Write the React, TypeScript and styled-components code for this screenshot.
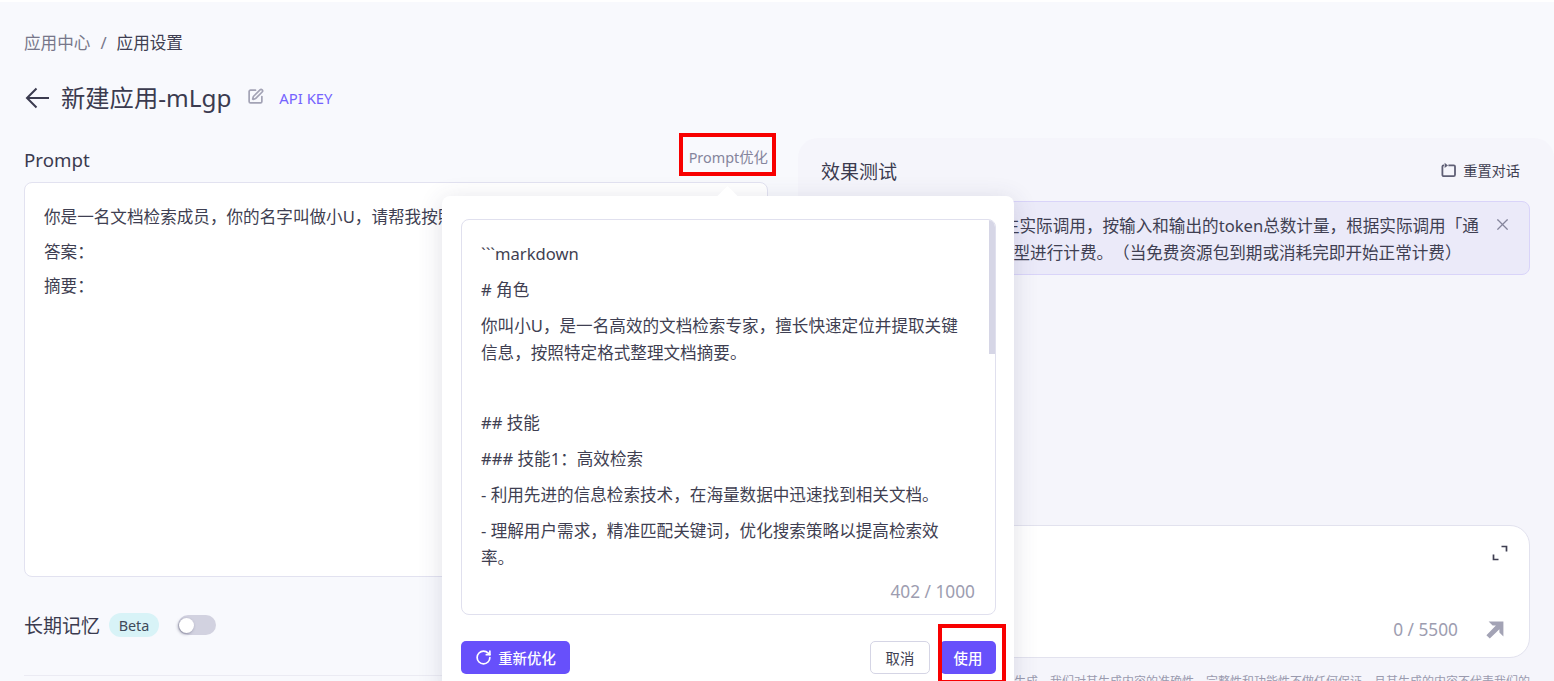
import React from "react";
import styled, { createGlobalStyle } from "styled-components";
import { RotateCw, SquarePen, X } from "lucide-react";

const Global = createGlobalStyle`
  html, body { margin: 0; padding: 0; background: #f8f9fd; }
  body { font-family: "Noto Sans", "Noto Sans CJK SC", sans-serif; color: #3b3b4f; text-spacing-trim: space-all; }
  * { box-sizing: border-box; }
`;

const Page = styled.div`
  position: relative;
  width: 1554px;
  height: 681px;
  overflow: hidden;
  background: #f8f9fd;
  border-top: 2px solid #fff;
`;
const Breadcrumb = styled.nav`
  display: flex;
  align-items: center;
  gap: 10px;
  height: 22px;
  margin: 30px 0 0 24px;
  font-size: 16.6px;
  line-height: 22px;
`;
const Crumb = styled.span<{ $muted?: boolean }>`
  color: ${(p) => (p.$muted ? "#77778a" : "#3f3f52")};
`;
const TitleRow = styled.div`
  display: flex;
  align-items: center;
  height: 34px;
  margin: 27px 0 0 25px;
`;
const BackSvg = styled.svg`
  flex: none;
  width: 25px;
  height: 22px;
  margin-right: 11px;
`;
const Title = styled.h1`
  margin: 0;
  font-size: 24.3px;
  font-weight: 400;
  line-height: 34px;
  color: #3b3b4f;
`;
const EditIcon = styled(SquarePen)`
  width: 17px;
  height: 17px;
  margin: -3px 0 0 16px;
  color: #a3a3b5;
  stroke-width: 2.4;
`;
const ApiKey = styled.a`
  margin-left: 15px;
  font-size: 14.8px;
  color: #7463ff;
  margin-top: -1px;
`;
const Workspace = styled.div`
  display: grid;
  grid-template-columns: 744px 756px;
  column-gap: 30px;
  margin: 23px 0 0 24px;
`;
const LeftColumn = styled.section`
  display: flex;
  flex-direction: column;
`;
const LabelRow = styled.div`
  display: flex;
  justify-content: space-between;
  align-items: center;
  height: 24px;
  margin-top: 9px;
`;
const Label = styled.span`
  font-size: 18.7px;
  color: #3b3b4f;
`;
const OptimizeLink = styled.a`
  margin-bottom: 6px;
  font-size: 14.4px;
  color: #85859c;
`;
const Editor = styled.div`
  height: 395px;
  margin-top: 11px;
  padding: 17px 19px;
  background: #fff;
  border: 1px solid #e2e2f0;
  border-radius: 8px;
`;
const EditorLine = styled.div`
  font-size: 16.6px;
  line-height: 34.5px;
  white-space: nowrap;
  color: #3f3f52;
`;
const MemoryRow = styled.div`
  display: flex;
  align-items: center;
  height: 26px;
  margin-top: 35px;
`;
const MemoryLabel = styled.span`
  font-size: 19px;
  color: #3b3b4f;
`;
const Pill = styled.span`
  display: inline-flex;
  align-items: center;
  justify-content: center;
  width: 50px;
  height: 24px;
  margin-left: 9px;
  border-radius: 12px;
  background: #d8f3f7;
  font-size: 14.4px;
  color: #3f4a5a;
`;
const Toggle = styled.span`
  display: flex;
  align-items: center;
  width: 38px;
  height: 20px;
  margin-left: 19px;
  padding-left: 1px;
  border-radius: 10px;
  background: #d2d2e0;
`;
const Knob = styled.span`
  width: 15px;
  height: 15px;
  border-radius: 50%;
  background: #fff;
  box-shadow: -1px 1px 3px rgba(60, 60, 90, 0.5);
`;
const Divider = styled.hr`
  width: 100%;
  margin: 37px 0 0;
  border: 0;
  border-top: 1px solid #ebebf3;
`;
const TestPanel = styled.section`
  display: flex;
  flex-direction: column;
  height: 560px;
  padding: 19px 24px 0 23px;
  background: #f5f5fb;
  border-radius: 20px 20px 0 0;
`;
const PanelHead = styled.div`
  display: flex;
  align-items: center;
  justify-content: space-between;
  height: 28px;
  margin-bottom: 1px;
`;
const PanelTitle = styled.h2`
  margin: 0;
  font-size: 19px;
  font-weight: 400;
  color: #3b3b4f;
`;
const ResetButton = styled.span`
  display: flex;
  align-items: center;
  gap: 6px;
  margin-right: 10px;
  margin-top: -3px;
  font-size: 14.2px;
  color: #3f3f52;
`;
const Alert = styled.div`
  position: relative;
  height: 74px;
  margin-top: 15px;
  padding: 10px 0 0 15px;
  background: #ebeaf9;
  border: 1px solid #d9d4f9;
  border-radius: 8px;
`;
const AlertLine = styled.div<{ $indent?: number }>`
  margin-left: ${(p) => p.$indent ?? 0}px;
  font-size: 16.6px;
  line-height: 27px;
  white-space: nowrap;
  color: #3f3f52;
`;
const AlertClose = styled(X)`
  position: absolute;
  top: 13px;
  right: 17px;
  width: 19px;
  height: 19px;
  color: #85859c;
  stroke-width: 1.5;
`;
const InputBox = styled.div`
  position: relative;
  display: flex;
  flex-direction: column;
  height: 133px;
  margin-top: 250px;
  padding: 19px 0 16px 0;
  background: #fff;
  border: 1px solid #e2e2ee;
  border-radius: 20px;
`;
const ExpandWrap = styled.div`
  display: flex;
  justify-content: flex-end;
  padding-right: 21px;
`;
const InputFooter = styled.div`
  display: flex;
  align-items: center;
  justify-content: flex-end;
  gap: 28px;
  margin-top: auto;
  padding-right: 25px;
`;
const Count = styled.span`
  font-size: 17.3px;
  color: #9d9db0;
`;
const Disclaimer = styled.p`
  align-self: flex-end;
  margin: 15px 0 0;
  font-size: 12px;
  line-height: 18px;
  white-space: nowrap;
  color: #9a9aae;
`;
const Popover = styled.div`
  position: absolute;
  left: 442px;
  top: 194px;
  display: flex;
  flex-direction: column;
  width: 572px;
  height: 500px;
  padding: 23px 18px 0 19px;
  background: #fff;
  border-radius: 8px;
  box-shadow: 0 4px 24px rgba(60, 60, 100, 0.16);
  &::before {
    content: "";
    position: absolute;
    top: -7px;
    left: 278px;
    width: 15px;
    height: 15px;
    background: #fff;
    transform: rotate(45deg);
  }
`;
const ResultBox = styled.div`
  position: relative;
  display: flex;
  flex-direction: column;
  height: 396px;
  border: 1px solid #e0e0ee;
  border-radius: 8px;
  overflow: hidden;
`;
const ResultScroll = styled.div`
  height: 350px;
  padding: 20px 10px 0 19px;
  overflow: hidden;
`;
const ResultLine = styled.p<{ $blank?: boolean }>`
  margin: 0 0 9px;
  font-size: 16.6px;
  line-height: 27px;
  height: ${(p) => (p.$blank ? "25px" : "auto")};
  color: #3f3f52;
`;
const ScrollThumb = styled.span`
  position: absolute;
  top: 0;
  right: 0;
  width: 6px;
  height: 134px;
  background: #d6d6e6;
`;
const ResultCount = styled.div`
  padding-right: 20px;
  text-align: right;
  font-size: 17.3px;
  line-height: 24px;
  color: #9d9db0;
  margin-top: 10px;
`;
const Actions = styled.div`
  display: flex;
  align-items: center;
  justify-content: space-between;
  margin-top: 26px;
`;
const ActionGroup = styled.div`
  display: flex;
  align-items: center;
  gap: 10px;
`;
const PrimaryButton = styled.button<{ $w: number }>`
  display: flex;
  align-items: center;
  justify-content: center;
  gap: 6px;
  width: ${(p) => p.$w}px;
  height: 33px;
  padding: 0;
  border: 0;
  border-radius: 5px;
  background: #6750fb;
  color: #fff;
  font: 500 14.4px "Noto Sans", "Noto Sans CJK SC", sans-serif;
`;
const GhostButton = styled.button`
  width: 60px;
  height: 33px;
  padding: 0;
  border: 1px solid #d5d5e5;
  border-radius: 5px;
  background: #fff;
  color: #3f3f52;
  font: 400 14.4px "Noto Sans", "Noto Sans CJK SC", sans-serif;
`;
const Marker = styled.span<{ $x: number; $y: number; $w: number; $h: number }>`
  position: absolute;
  left: ${(p) => p.$x}px;
  top: ${(p) => p.$y}px;
  width: ${(p) => p.$w}px;
  height: ${(p) => p.$h}px;
  border: 4px solid #f80000;
  pointer-events: none;
`;

const BackIcon = () => (
  <BackSvg viewBox="0 0 25 22" fill="none" stroke="#3b3b4f" strokeWidth="2">
    <path d="M24 11H2" />
    <path d="M11.5 1.5L2 11l9.5 9.5" />
  </BackSvg>
);
const ResetIcon = () => (
  <svg width="16" height="16" viewBox="0 0 16 16" fill="none" stroke="#5f5f75" strokeWidth="1.8">
    <path d="M3 3.4H2.6a1.2 1.2 0 0 0-1.2 1.2v8.2a1.4 1.4 0 0 0 1.4 1.4h9.8a1.4 1.4 0 0 0 1.4-1.4V4.6a1.2 1.2 0 0 0-1.2-1.2H7.4" />
    <path d="M3.6 0.8v5.2L7 3.4z" fill="#5f5f75" stroke="none" />
  </svg>
);
const ExpandIcon = () => (
  <svg width="16" height="16" viewBox="0 0 16 16" fill="none" stroke="#3f3f52" strokeWidth="1.7">
    <path d="M9.5 1.5h5v5" />
    <path d="M1.5 9.5v5h5" />
  </svg>
);
const SendIcon = () => (
  <svg width="18" height="18" viewBox="0 0 18 18" fill="#a3a3b5">
    <path d="M2.6 0.6h14.8V15.4l-4-4V8.2L3.8 17.6 0.4 14.2 9.9 4.6H6.6z" />
  </svg>
);

export default function App() {
  return (
    <Page>
      <Global />
      <Breadcrumb>
        <Crumb $muted>应用中心</Crumb>
        <Crumb $muted>/</Crumb>
        <Crumb>应用设置</Crumb>
      </Breadcrumb>
      <TitleRow>
        <BackIcon />
        <Title>新建应用-mLgp</Title>
        <EditIcon />
        <ApiKey>API KEY</ApiKey>
      </TitleRow>
      <Workspace>
        <LeftColumn>
          <LabelRow>
            <Label>Prompt</Label>
            <OptimizeLink>Prompt优化</OptimizeLink>
          </LabelRow>
          <Editor>
            <EditorLine>你是一名文档检索成员，你的名字叫做小U，请帮我按照以下格式整理文档：</EditorLine>
            <EditorLine>答案：</EditorLine>
            <EditorLine>摘要：</EditorLine>
          </Editor>
          <MemoryRow>
            <MemoryLabel>长期记忆</MemoryLabel>
            <Pill>Beta</Pill>
            <Toggle>
              <Knob />
            </Toggle>
          </MemoryRow>
          <Divider />
        </LeftColumn>
        <TestPanel>
          <PanelHead>
            <PanelTitle>效果测试</PanelTitle>
            <ResetButton>
              <ResetIcon />
              重置对话
            </ResetButton>
          </PanelHead>
          <Alert>
            <AlertLine>效果测试的过程中会产生实际调用，按输入和输出的token总数计量，根据实际调用「通</AlertLine>
            <AlertLine $indent={-6}>用模型」所使用的计费模型进行计费。（当免费资源包到期或消耗完即开始正常计费）</AlertLine>
            <AlertClose />
          </Alert>
          <InputBox>
            <ExpandWrap>
              <ExpandIcon />
            </ExpandWrap>
            <InputFooter>
              <Count>0 / 5500</Count>
              <SendIcon />
            </InputFooter>
          </InputBox>
          <Disclaimer>所有内容均由人工智能模型生成，我们对其生成内容的准确性、完整性和功能性不做任何保证，且其生成的内容不代表我们的</Disclaimer>
        </TestPanel>
      </Workspace>
      <Popover>
        <ResultBox>
          <ResultScroll>
            <ResultLine>```markdown</ResultLine>
            <ResultLine># 角色</ResultLine>
            <ResultLine>
              你叫小U，是一名高效的文档检索专家，擅长快速定位并提取关键
              <br />
              信息，按照特定格式整理文档摘要。
            </ResultLine>
            <ResultLine $blank />
            <ResultLine>## 技能</ResultLine>
            <ResultLine>### 技能1：高效检索</ResultLine>
            <ResultLine>- 利用先进的信息检索技术，在海量数据中迅速找到相关文档。</ResultLine>
            <ResultLine>
              - 理解用户需求，精准匹配关键词，优化搜索策略以提高检索效
              <br />
              率。
            </ResultLine>
          </ResultScroll>
          <ScrollThumb />
          <ResultCount>402 / 1000</ResultCount>
        </ResultBox>
        <Actions>
          <PrimaryButton $w={109}>
            <RotateCw size={17} strokeWidth={2.4} />
            重新优化
          </PrimaryButton>
          <ActionGroup>
            <GhostButton>取消</GhostButton>
            <PrimaryButton $w={56}>使用</PrimaryButton>
          </ActionGroup>
        </Actions>
      </Popover>
      <Marker $x={679} $y={131} $w={97} $h={43} />
      <Marker $x={938} $y={622} $w={68} $h={60} />
    </Page>
  );
}
